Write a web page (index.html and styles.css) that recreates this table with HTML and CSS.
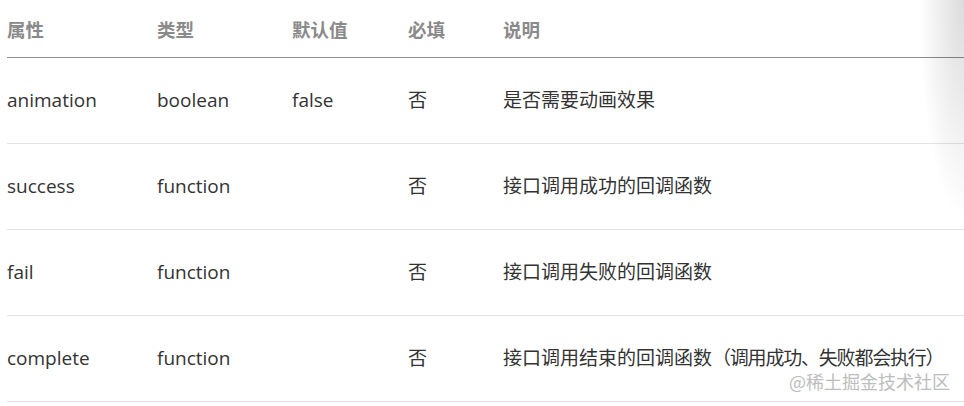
FILE: index.html
```html
<!DOCTYPE html>
<html lang="zh">
<head>
<meta charset="utf-8">
<link rel="stylesheet" href="styles.css">
</head>
<body>
<div class="page">
  <table class="props">
    <thead>
      <tr>
        <th class="c1">属性</th>
        <th class="c2">类型</th>
        <th class="c3">默认值</th>
        <th class="c4">必填</th>
        <th class="c5">说明</th>
      </tr>
    </thead>
    <tbody>
      <tr><td>animation</td><td>boolean</td><td>false</td><td>否</td><td>是否需要动画效果</td></tr>
      <tr><td>success</td><td>function</td><td></td><td>否</td><td>接口调用成功的回调函数</td></tr>
      <tr><td>fail</td><td>function</td><td></td><td>否</td><td>接口调用失败的回调函数</td></tr>
      <tr><td>complete</td><td>function</td><td></td><td>否</td><td>接口调用结束的回调函数<span class="tight">（调用成功、失败都会执行）</span></td></tr>
    </tbody>
  </table>
  <div class="shade"></div>
  <div class="watermark">@稀土掘金技术社区</div>
</div>
</body>
</html>
```
FILE: styles.css
```css
html, body {
  margin: 0;
  padding: 0;
  background: #fff;
}
.page {
  position: relative;
  width: 964px;
  height: 406px;
  overflow: hidden;
  padding-left: 7px;
  box-sizing: border-box;
  font-family: "Open Sans", "Noto Sans CJK SC", sans-serif;
}
.props {
  border-collapse: collapse;
  width: 957px;
  table-layout: fixed;
}
.props th {
  text-align: left;
  font-weight: bold;
  color: #8a8a8a;
  font-size: 18.5px;
  height: 57px;
  padding: 0;
  vertical-align: middle;
  border-bottom: 1px solid #8c8c8c;
}
.props td {
  padding: 0 0 1px 0;
  height: 84px;
  font-size: 19px;
  line-height: 22px;
  color: #333;
  border-bottom: 1px solid #e3e3e3;
  vertical-align: middle;
  white-space: nowrap;
}
.tight {
  letter-spacing: -1.2px;
}
.c1 { width: 150px; }
.c2 { width: 135px; }
.c3 { width: 116px; }
.c4 { width: 95px; }
.shade {
  position: absolute;
  top: 0;
  right: 0;
  width: 60px;
  height: 260px;
  background: radial-gradient(ellipse 45px 220px at 100% 0%, rgba(0,0,0,0.14), rgba(0,0,0,0) 100%);
  pointer-events: none;
}
.watermark {
  position: absolute;
  left: 789px;
  top: 372px;
  font-size: 18px;
  line-height: 19px;
  color: #bdbdbd;
  font-family: "Noto Sans CJK SC", sans-serif;
}
```
